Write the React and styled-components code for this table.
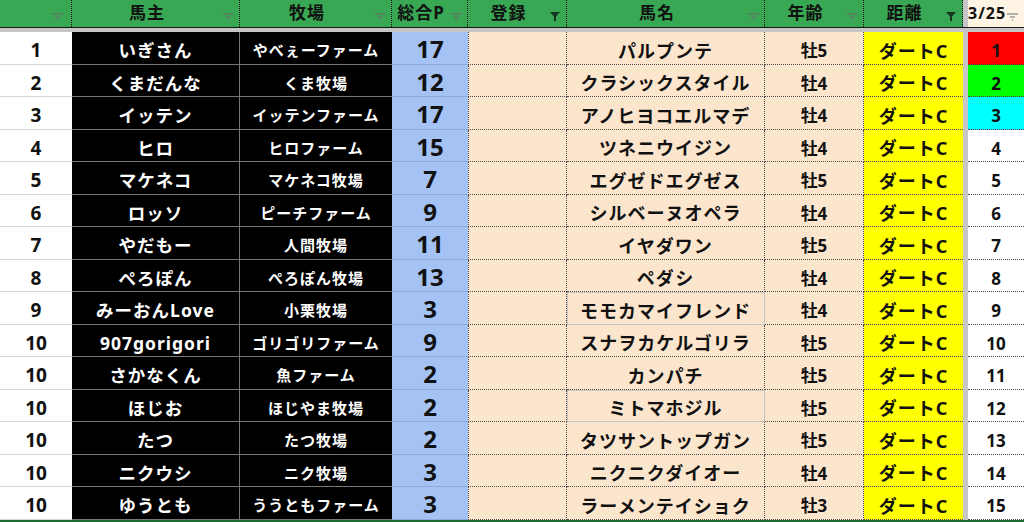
import React from 'react';
import styled, { createGlobalStyle } from 'styled-components';

const GlobalStyle = createGlobalStyle`
  html, body { margin: 0; padding: 0; background: #fff; overflow: hidden; }
  body { font-family: "Noto Sans", "Noto Sans CJK JP", sans-serif; }
`;

const COLS = '72px 168px 152px 76px 99px 198px 99px 99px 5px 56px';
const DOTTED = '1px dotted #4a4a4a';

const Sheet = styled.div`
  width: 1024px;
  height: 522px;
  overflow: hidden;
  display: flex;
  flex-direction: column;
  font-family: "Noto Sans", "Noto Sans CJK JP", sans-serif;
  font-weight: 700;
  color: #111;
`;

const HeaderRow = styled.div`
  display: grid;
  grid-template-columns: ${COLS};
  height: 28px;
  box-sizing: border-box;
  border-bottom: 1px solid #1b1b1b;
`;

const HeaderCell = styled.div`
  display: flex;
  align-items: center;
  box-sizing: border-box;
  background: ${(p) => (p.$cream ? '#fdf4e3' : '#38a854')};
  border-right: ${(p) => (p.$cream ? 'none' : '1px dotted #111')};
  padding-right: ${(p) => p.$pad || 5}px;
`;

const HeaderLabel = styled.span`
  flex: 1;
  text-align: center;
  font-size: ${(p) => p.$size || 17}px;
  letter-spacing: 1px;
  line-height: 1.2;
  white-space: nowrap;
`;

const IconSlot = styled.span`
  display: flex;
  width: 12px;
  margin-top: 6px;
  justify-content: center;
`;

const FreezeGap = styled.div`
  background: #c6c6c6;
`;

const FreezeBar = styled.div`
  height: 4px;
  background: #c6c6c6;
  flex: none;
`;

const Body = styled.div`
  display: flex;
  flex-direction: column;
  border-bottom: 2px solid #1f6a31;
  flex: none;
`;

const Row = styled.div`
  display: grid;
  grid-template-columns: ${COLS};
  height: 32.5px;
`;

const Cell = styled.div`
  display: flex;
  align-items: center;
  justify-content: center;
  box-sizing: border-box;
  padding-top: ${(p) => p.$shift ?? 6}px;
  white-space: nowrap;
  line-height: 1;
`;

const RankCell = styled(Cell)`
  background: #fff;
  border-bottom: 1px solid #d6d6d6;
  font-size: 19px;
`;

const OwnerCell = styled(Cell)`
  background: #000;
  color: #fff;
  font-size: 17.5px;
  letter-spacing: 1px;
  border-bottom: 1px solid #767676;
  border-right: 1px solid #767676;
`;

const FarmCell = styled(Cell)`
  background: #000;
  color: #fff;
  font-size: 15px;
  letter-spacing: 1px;
  border-bottom: 1px solid #767676;
`;

const PointCell = styled(Cell)`
  background: #a4c2f4;
  font-size: 24px;
  padding-top: 3px;
  border-bottom: 1px solid #8eaad8;
`;

const EntryCell = styled(Cell)`
  background: #fce5cd;
  border-left: ${DOTTED};
  border-right: ${DOTTED};
  border-bottom: ${DOTTED};
`;

const HorseCell = styled(Cell)`
  background: #fce5cd;
  font-size: 18px;
  letter-spacing: 1px;
  border-right: ${(p) => (p.$solid ? '1px solid #c4c4c4' : DOTTED)};
  border-bottom: ${(p) => (p.$solid ? '1px solid #c4c4c4' : DOTTED)};
  box-shadow: ${(p) => (p.$solid ? 'inset 0 1px 0 #c4c4c4, inset 1px 0 0 #c4c4c4' : 'none')};
`;

const AgeCell = styled(Cell)`
  background: #fce5cd;
  font-size: 17px;
  border-right: ${DOTTED};
  border-bottom: ${DOTTED};
`;

const DistCell = styled(Cell)`
  background: #ffff00;
  font-size: 18px;
  letter-spacing: 1px;
  border-bottom: ${DOTTED};
`;

const ResultCell = styled(Cell)`
  background: ${(p) => p.$bg || '#fff'};
  font-size: 17px;
  border-bottom: ${DOTTED};
`;

const FilterIcon = ({ active, color = '#5f7a63' }) =>
  active ? (
    <svg width="10" height="9" viewBox="0 0 10 9">
      <polygon points="0,0 10,0 6,4.5 6,9 4,9 4,4.5" fill="#17361f" />
    </svg>
  ) : (
    <svg width="11" height="8" viewBox="0 0 11 8">
      <path d="M0 1h11M3 4h5M4.8 7h1.4" stroke={color} strokeWidth="1.4" fill="none" />
    </svg>
  );

const headers = [
  { label: '', pad: 8 },
  { label: '馬主' },
  { label: '牧場' },
  { label: '総合P' },
  { label: '登録', active: true },
  { label: '馬名' },
  { label: '年齢' },
  { label: '距離', active: true },
];

const rows = [
  ['1', 'いぎさん', 'やべぇーファーム', '17', 'パルプンテ', '牡5', '1', '#ff0000'],
  ['2', 'くまだんな', 'くま牧場', '12', 'クラシックスタイル', '牡4', '2', '#00ff00'],
  ['3', 'イッテン', 'イッテンファーム', '17', 'アノヒヨコエルマデ', '牡4', '3', '#00ffff'],
  ['4', 'ヒロ', 'ヒロファーム', '15', 'ツネニウイジン', '牡4', '4'],
  ['5', 'マケネコ', 'マケネコ牧場', '7', 'エグゼドエグゼス', '牡5', '5'],
  ['6', 'ロッソ', 'ピーチファーム', '9', 'シルベーヌオペラ', '牡4', '6'],
  ['7', 'やだもー', '人間牧場', '11', 'イヤダワン', '牡5', '7'],
  ['8', 'ぺろぽん', 'ぺろぽん牧場', '13', 'ペダシ', '牡4', '8'],
  ['9', 'みーおんLove', '小栗牧場', '3', 'モモカマイフレンド', '牡4', '9', null, true],
  ['10', '907gorigori', 'ゴリゴリファーム', '9', 'スナヲカケルゴリラ', '牡5', '10'],
  ['10', 'さかなくん', '魚ファーム', '2', 'カンパチ', '牡5', '11'],
  ['10', 'ほじお', 'ほじやま牧場', '2', 'ミトマホジル', '牡5', '12', null, true],
  ['10', 'たつ', 'たつ牧場', '2', 'タツサントップガン', '牡5', '13'],
  ['10', 'ニクウシ', 'ニク牧場', '3', 'ニクニクダイオー', '牡4', '14'],
  ['10', 'ゆうとも', 'ううともファーム', '3', 'ラーメンテイショク', '牡3', '15'],
];

export default function App() {
  return (
    <>
      <GlobalStyle />
      <Sheet>
        <HeaderRow>
          {headers.map((h, i) => (
            <HeaderCell key={i} $pad={h.pad}>
              <HeaderLabel>{h.label}</HeaderLabel>
              <IconSlot>
                <FilterIcon active={h.active} />
              </IconSlot>
            </HeaderCell>
          ))}
          <FreezeGap />
          <HeaderCell $cream $pad={6}>
            <HeaderLabel $size={16}>3/25</HeaderLabel>
            <IconSlot>
              <FilterIcon color="#9a9a9a" />
            </IconSlot>
          </HeaderCell>
        </HeaderRow>
        <FreezeBar />
        <Body>
          {rows.map(([rank, owner, farm, pts, horse, age, res, bg, solid], i) => (
            <Row key={i}>
              <RankCell>{rank}</RankCell>
              <OwnerCell>{owner}</OwnerCell>
              <FarmCell>{farm}</FarmCell>
              <PointCell>{pts}</PointCell>
              <EntryCell />
              <HorseCell $solid={solid}>{horse}</HorseCell>
              <AgeCell>{age}</AgeCell>
              <DistCell>ダートC</DistCell>
              <FreezeGap />
              <ResultCell $bg={bg}>{res}</ResultCell>
            </Row>
          ))}
        </Body>
      </Sheet>
    </>
  );
}
